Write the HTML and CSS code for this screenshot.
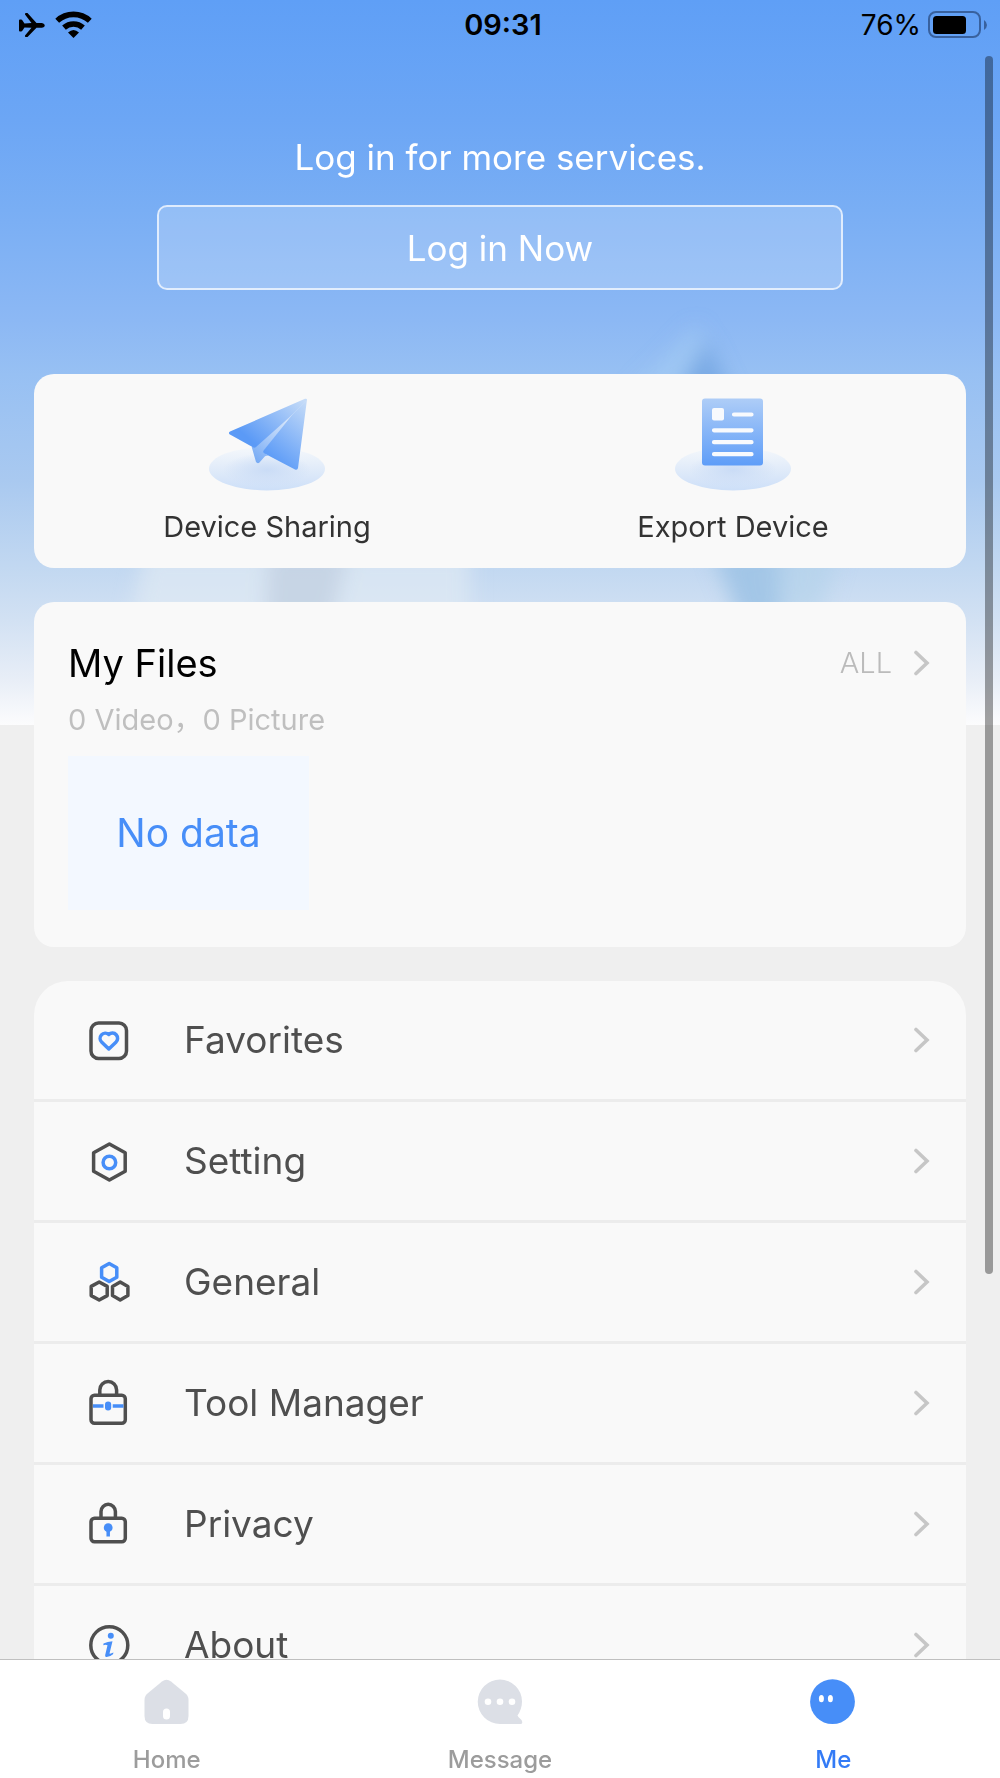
FILE: index.html
```html
<!DOCTYPE html>
<html lang="en">
<head>
<meta charset="utf-8">
<meta name="viewport" content="width=device-width, initial-scale=1">
<title>Me</title>
<link rel="stylesheet" href="styles.css">
</head>
<body>
<svg class="defs" aria-hidden="true">
  <defs>
    <symbol id="chevron" viewBox="0 0 16 26"><path d="M2 2.5 13 13 2 23.5" fill="none" stroke="#c6c6c6" stroke-width="3.600" stroke-linecap="round" stroke-linejoin="miter"/></symbol>
    <linearGradient id="disc" x1="0" y1="0" x2="0" y2="1"><stop offset="0" stop-color="#f5f8fb"/><stop offset="1" stop-color="#cddff8"/></linearGradient>
    <radialGradient id="discCore"><stop offset="0" stop-color="#cadcf6"/><stop offset="1" stop-color="#cadcf6" stop-opacity="0"/></radialGradient>
    <linearGradient id="wing" x1="0.1" y1="0.6" x2="0.95" y2="0"><stop offset="0" stop-color="#5b9af6"/><stop offset="1" stop-color="#c6dcf8"/></linearGradient>
    <linearGradient id="wingRight" x1="0.45" y1="0.95" x2="0.95" y2="0"><stop offset="0" stop-color="#5f9df7"/><stop offset="1" stop-color="#c6dcf8"/></linearGradient>
    <linearGradient id="fold" x1="0" y1="1" x2="0.7" y2="0"><stop offset="0" stop-color="#6fa6f4"/><stop offset="0.55" stop-color="#a9caf8"/><stop offset="1" stop-color="#d5e5fa"/></linearGradient>
    <linearGradient id="sheet" x1="0" y1="0" x2="0" y2="1"><stop offset="0" stop-color="#aecdf7"/><stop offset="1" stop-color="#5e9df8"/></linearGradient>
    <filter id="haze" x="-50%" y="-50%" width="200%" height="200%"><feGaussianBlur stdDeviation="10"/></filter>
  </defs>
</svg>

<div class="screen">
  <svg class="backdrop" viewBox="0 0 1000 725" preserveAspectRatio="none" aria-hidden="true">
    <g filter="url(#haze)">
      <path d="M625 400 698 325 715 400Z" fill="#a3caf4" opacity=".7"/>
      <path d="M668 410 706 340 738 410Z" fill="#76a6e2" opacity=".9"/>
      <path d="M145 550H470V625H130Z" fill="#dfe9f4" opacity=".7"/>
      <path d="M268 550H350L330 625H265Z" fill="#c2cfe0" opacity=".75"/>
      <path d="M712 550H785L780 625H742Z" fill="#9fc3e6" opacity=".9"/>
      <path d="M770 550H840L820 615H775Z" fill="#b0d0ea" opacity=".6"/>
    </g>
  </svg>

  <header class="status">
    <div class="status-side">
      <svg width="75" height="32" viewBox="0 0 75 32" role="img" aria-label="Airplane mode, Wi-Fi">
        <path d="M1 11.500Q1 10.500 2 10.500H3Q4 10.500 4.500 11.500L6.500 14.500 13.500 14 7 5.500Q6.500 4 8 4H9.500L18.500 14 24 14Q26.800 14.600 26.800 16.500 26.800 18.200 24 18.800L18.500 18.800 9.500 28H8Q6.500 28 7 26.500L13.500 18.800 6.500 18.500 4.500 21.500Q4 22.500 3 22.500H2Q1 22.500 1 21.500Z"/>
        <g fill="none" stroke="#000" stroke-width="5.600"><path d="M39.200 11.800A24 24 0 0 1 71.800 11.800"/><path d="M46 18.600A14.500 14.500 0 0 1 65 18.600"/></g>
        <path d="M50 23.500Q55.500 18.500 61 23.500L55.500 29Z"/>
      </svg>
    </div>
    <time class="clock">09:31</time>
    <div class="status-side status-end">
      <span>76%</span>
      <svg width="60" height="28" viewBox="0 0 60 28" role="img" aria-label="Battery">
        <rect x="1" y="1" width="51" height="25" rx="7" fill="none" stroke="#2b4c80" stroke-opacity=".75" stroke-width="2"/>
        <rect x="5" y="5" width="33" height="18" rx="3.500"/>
        <path d="M56 9Q59 11 59 14T56 19Z" fill="#2b4c80" fill-opacity=".75"/>
      </svg>
    </div>
  </header>

  <main class="content">
    <section class="login">
      <p class="login-text">Log in for more services.</p>
      <button class="login-button" type="button">Log in Now</button>
    </section>

    <nav class="card actions" aria-label="Devices">
      <a class="action" href="#sharing">
        <svg width="118" height="94" viewBox="0 0 118 94" aria-hidden="true">
          <ellipse cx="59" cy="70.700" rx="58" ry="21.700" fill="url(#disc)"/>
          <ellipse cx="59" cy="72" rx="44" ry="17" fill="url(#discCore)"/>
          <path d="M43.700 49 84 17 55 53.700 60.500 58Q58 57.200 56.500 58.700L51.500 64.500Q49.500 66 48 64Z" fill="url(#fold)"/>
          <path d="M22 33.500 97 .8Q99 .2 99 2L84 17 48 49Q46.500 50.300 44.500 49L21.500 36.300Q20 34.800 22 33.500Z" fill="url(#wing)"/>
          <path d="M99 1.500 90 70Q89.500 72.500 87 71.500L56.500 55.500Q54.200 54.300 55.500 52.500L84 17Z" fill="url(#wingRight)"/>
        </svg>
        <span>Device Sharing</span>
      </a>
      <a class="action" href="#export">
        <svg width="118" height="94" viewBox="0 0 118 94" aria-hidden="true">
          <ellipse cx="59" cy="70.700" rx="58" ry="21.700" fill="url(#disc)"/>
          <ellipse cx="59" cy="72" rx="44" ry="17" fill="url(#discCore)"/>
          <rect x="28" y=".5" width="61" height="67" rx="3" fill="url(#sheet)"/>
          <rect x="38" y="10" width="12" height="12.500" rx="2" fill="#f8fafd"/>
          <path d="M60 16.500H77.500M40 32.300H77.500M40 44.200H77.500M40 56.200H77.500" stroke="#f8fafd" stroke-width="4.200" stroke-linecap="round"/>
        </svg>
        <span>Export Device</span>
      </a>
    </nav>

    <section class="card files">
      <div class="files-head">
        <h1>My Files</h1>
        <a class="all" href="#all">ALL <svg class="chevron" width="16" height="26"><use href="#chevron"/></svg></a>
      </div>
      <p class="files-count">0 Video，0 Picture</p>
      <div class="empty">No data</div>
    </section>

    <nav class="card menu" aria-label="Menu">
      <a class="row" href="#favorites">
        <svg class="icon" viewBox="0 -2 44 48" aria-hidden="true"><rect x="4" y="5" width="35.500" height="35.500" rx="7.500"/><path class="accent" d="M21.800 31 14.800 24.200A5 5 0 0 1 21.800 16.500 5 5 0 0 1 28.900 24.200Z"/></svg>
        <span>Favorites</span><svg class="chevron" width="16" height="26"><use href="#chevron"/></svg>
      </a>
      <a class="row" href="#setting">
        <svg class="icon" viewBox="0 -2 44 48" aria-hidden="true"><path d="M22.400 5 38.200 13.800V32.200L22.400 41 6.600 32.200V13.800Z"/><circle class="accent" cx="22.400" cy="23.500" r="6.300"/></svg>
        <span>Setting</span><svg class="chevron" width="16" height="26"><use href="#chevron"/></svg>
      </a>
      <a class="row" href="#general">
        <svg class="icon" viewBox="0 -2 44 48" aria-hidden="true"><path class="accent" d="M22.200 3.400 29.800 7.800V17.200L22.200 21.600 14.600 17.200V7.800Z"/><path d="M12.200 22 20.200 26.400V35.600L12.200 40 4.200 35.600V26.400ZM33.200 22 40.900 26.400V35.600L33.200 40 25.500 35.600V26.400Z"/></svg>
        <span>General</span><svg class="chevron" width="16" height="26"><use href="#chevron"/></svg>
      </a>
      <a class="row" href="#tools">
        <svg class="icon" viewBox="0 -2 44 48" aria-hidden="true"><rect x="4" y="14.200" width="34.300" height="28" rx="3.500"/><path d="M12.800 14V9A8.400 8.400 0 0 1 29.600 9V14"/><path class="accent" d="M6 24.900H16.500M25.700 24.900H36.500"/><rect class="dot" x="18" y="20.500" width="6.200" height="9" rx="3"/></svg>
        <span>Tool Manager</span><svg class="chevron" width="16" height="26"><use href="#chevron"/></svg>
      </a>
      <a class="row" href="#privacy">
        <svg class="icon" viewBox="0 -2 44 48" aria-hidden="true"><rect x="4" y="16.200" width="34.300" height="23.500" rx="3.500"/><path d="M14 16V9.500A7.200 7.200 0 0 1 28.400 9.500V16"/><circle class="dot" cx="21.200" cy="25.700" r="4.400"/><path class="accent" d="M21.200 27V34.500"/></svg>
        <span>Privacy</span><svg class="chevron" width="16" height="26"><use href="#chevron"/></svg>
      </a>
      <a class="row" href="#about">
        <svg class="icon" viewBox="0 -2 44 48" aria-hidden="true"><circle cx="22.300" cy="22.200" r="18.500"/><circle class="dot" cx="23.800" cy="12.800" r="3"/><path class="dot" d="M16.500 20.500Q20.500 18.500 25.500 18.300L22.500 30.500Q23.500 31 26.500 29.500L26 31.200Q22.500 34.300 19 34 17.800 33.500 18.200 32L20.500 22.300Q19 21.400 16.300 22.200Z"/></svg>
        <span>About</span><svg class="chevron" width="16" height="26"><use href="#chevron"/></svg>
      </a>
    </nav>
  </main>

  <nav class="tabs" aria-label="Main">
    <a class="tab" href="#home">
      <svg width="46" height="46" viewBox="0 0 46 46" aria-hidden="true"><path d="M18 2.500Q22.500 -1.200 27 2.500L41.500 14.500Q44.500 17 44.500 21V37Q44.500 45 36.500 45H8.500Q.5 45 .5 37V21Q.5 17 3.500 14.500Z" fill="#dcdfe6"/><rect x="19" y="29.500" width="7" height="11" rx="3.500" fill="#fff"/></svg>
      <span>Home</span>
    </a>
    <a class="tab" href="#message">
      <svg width="46" height="46" viewBox="0 0 46 46" aria-hidden="true"><path d="M23 .5A22 22 0 0 1 45 22.500C45 28 43.200 32.500 40.500 36.500Q41 38 44 40.500C46 42.500 45.500 45 43.500 45H23A22.200 22.200 0 0 1 23 .5Z" fill="#dcdfe6"/><g fill="#fff"><circle cx="11" cy="22.700" r="3.300"/><circle cx="23" cy="22.700" r="3.300"/><circle cx="35" cy="22.700" r="3.300"/></g></svg>
      <span>Message</span>
    </a>
    <a class="tab current" href="#me" aria-current="page">
      <svg width="46" height="46" viewBox="0 0 46 46" aria-hidden="true"><circle cx="22.500" cy="22.700" r="22.400" fill="#478ef8"/><g fill="#fff"><ellipse cx="11.400" cy="19.700" rx="2.500" ry="3.600"/><ellipse cx="20.400" cy="19.700" rx="2.500" ry="3.600"/></g></svg>
      <span>Me</span>
    </a>
  </nav>

  <div class="scroll-thumb" aria-hidden="true"></div>
</div>
</body>
</html>
```
FILE: styles.css
```css
* {
  box-sizing: border-box;
}

body,
h1,
p {
  margin: 0;
}

body {
  background: #efefef;
  font-family: Inter, "Noto Sans CJK SC", sans-serif;
  font-size: 29px;
  line-height: 36px;
}

a {
  color: inherit;
  text-decoration: none;
}

svg {
  display: block;
  flex: none;
}

.defs {
  position: absolute;
  width: 0;
  height: 0;
}

.screen {
  position: relative;
  display: flex;
  flex-direction: column;
  height: 100vh;
  overflow: hidden;
  background: #efefef;
}

.backdrop {
  position: absolute;
  top: 0;
  left: 0;
  width: 100%;
  height: 725px;
  background: linear-gradient(#5f9ff6 0, #6ca6f5 120px, #79aef4 210px, #8cb8f4 320px, #97c0f3 374px, #a9c9f0 480px, #c2d8f1 568px, #d2e1f3 620px, #e8eef7 680px, #fcfcfd 725px);
}

.status,
.content {
  position: relative;
}

.status {
  display: grid;
  grid-template-columns: 1fr auto 1fr;
  align-items: center;
  flex: none;
  height: 50px;
  padding: 0 12px 0 18px;
  color: #000;
}

.status-side {
  display: flex;
  align-items: center;
  gap: 7px;
}

.status-end {
  justify-content: flex-end;
  font-size: 28px;
}

.clock {
  font-weight: 600;
}

.content {
  flex: 1;
  min-height: 0;
  padding: 0 34px;
  overflow: hidden;
}

.login {
  display: flex;
  flex-direction: column;
  align-items: center;
  gap: 26px;
  padding: 85px 0 84px;
  color: #fff;
  font-size: 35px;
  line-height: 44px;
}

.login-button {
  width: 100%;
  max-width: 686px;
  height: 85px;
  border: 2px solid rgba(255, 255, 255, 0.7);
  border-radius: 10px;
  background: rgba(255, 255, 255, 0.2);
  color: inherit;
  font: inherit;
}

.card {
  margin-bottom: 34px;
  border-radius: 20px;
  background: #f9f9f9;
}

.actions {
  display: grid;
  grid-template-columns: 1fr 1fr;
  padding: 24px 0 23px;
}

.action {
  display: flex;
  flex-direction: column;
  align-items: center;
  gap: 17px;
  color: #333;
}

.files {
  padding: 36px 36px 37px 34px;
}

.files-head {
  display: flex;
  align-items: center;
  justify-content: space-between;
}

.files-head h1 {
  color: #000;
  font-size: 38px;
  font-weight: 400;
  line-height: 50px;
}

.all {
  display: flex;
  align-items: center;
  gap: 22px;
  color: #bbb;
  font-weight: 300;
}

.files-count {
  margin-top: 14px;
  color: #bfbfbf;
}

.empty {
  display: flex;
  align-items: center;
  justify-content: center;
  width: 241px;
  height: 154px;
  margin-top: 18px;
  background: #f3f8ff;
  color: #478ef8;
  font-size: 39px;
}

.menu {
  border-radius: 34px;
}

.row {
  display: flex;
  align-items: center;
  height: 121px;
  padding: 0 36px 0 53px;
  border-bottom: 3px solid #ececec;
  color: #4f4f4f;
  font-size: 37px;
}

.row span {
  flex: 1;
  padding-left: 53px;
}

.icon {
  width: 44px;
  height: 48px;
  fill: none;
  stroke: #4f4f4f;
  stroke-width: 3.5px;
  stroke-linejoin: round;
}

.icon .accent {
  stroke: #478ef8;
}

.icon .dot {
  fill: #478ef8;
  stroke: none;
}

.tabs {
  position: relative;
  display: grid;
  grid-template-columns: repeat(3, 1fr);
  flex: none;
  padding: 19px 0 4px;
  border-top: 1px solid #c0c0c0;
  background: #fff;
  color: #9c9c9c;
  font-size: 24px;
  font-weight: 500;
  line-height: 28px;
}

.tab {
  display: flex;
  flex-direction: column;
  align-items: center;
  gap: 21px;
}

.current {
  color: #337bf6;
}

.scroll-thumb {
  position: absolute;
  top: 56px;
  right: 7px;
  width: 8px;
  height: 1218px;
  border-radius: 4px;
  background: rgba(0, 0, 0, 0.36);
}
```
